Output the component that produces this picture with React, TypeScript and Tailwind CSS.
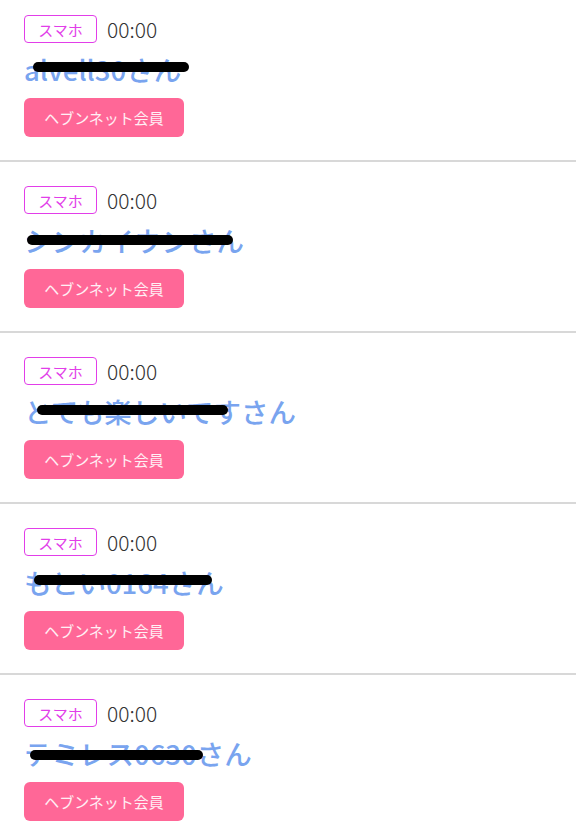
import React from "react";

interface Entry {
  name: string;
  time: string;
  // redaction mark: left offset, width, vertical centre inside the name block
  mark: { left: number; width: number; top: number };
}

const entries: Entry[] = [
  { name: "alvell30さん", time: "00:00", mark: { left: 9, width: 156, top: 19 } },
  { name: "シンカイウンさん", time: "00:00", mark: { left: 3, width: 206, top: 21 } },
  { name: "とても楽しいですさん", time: "00:00", mark: { left: 13, width: 191, top: 20 } },
  { name: "もとい0164さん", time: "00:00", mark: { left: 10, width: 178, top: 19 } },
  { name: "テミレス0630さん", time: "00:00", mark: { left: 6, width: 173, top: 23 } },
];

const Row: React.FC<{ entry: Entry; first: boolean }> = ({ entry, first }) => (
  <div className={first ? "pl-[24px] pt-[15px] pb-[23px]" : "pl-[24px] pt-[24px] pb-[23px]"}>
    {/* device badge + time */}
    <div className="flex items-center h-[28px]">
      <span className="flex items-center justify-center w-[73px] h-[28px] rounded-[4px] border border-[#e23ee9] text-[#e23ee9] text-[15px] leading-none">
        スマホ
      </span>
      <span className="ml-[10px] text-[21px] font-light text-[#333333] leading-none">{entry.time}</span>
    </div>

    {/* name, scribbled over */}
    <div className="relative h-[55px] flex items-center pb-[3px]">
      <span className="text-[27.5px] font-medium leading-[36px] text-[#79a4ef] whitespace-nowrap">
        {entry.name}
      </span>
      <span
        className="absolute h-[10px] rounded-full bg-black"
        style={{ left: entry.mark.left, width: entry.mark.width, top: entry.mark.top }}
      />
    </div>

    <button
      type="button"
      className="flex items-center justify-center w-[160px] h-[39px] rounded-[6px] bg-[#ff6797] text-white/90 text-[15px] leading-none"
    >
      ヘブンネット会員
    </button>
  </div>
);

export default function App() {
  return (
    <div
      className="w-[576px] min-h-[831px] bg-white overflow-hidden"
      style={{ fontFamily: '"Noto Sans CJK JP", "Noto Sans", sans-serif' }}
    >
      {entries.map((entry, i) => (
        <div key={i}>
          <Row entry={entry} first={i === 0} />
          {i < entries.length - 1 && <div className="h-[2px] bg-[#d8d8d8]" />}
        </div>
      ))}
    </div>
  );
}
